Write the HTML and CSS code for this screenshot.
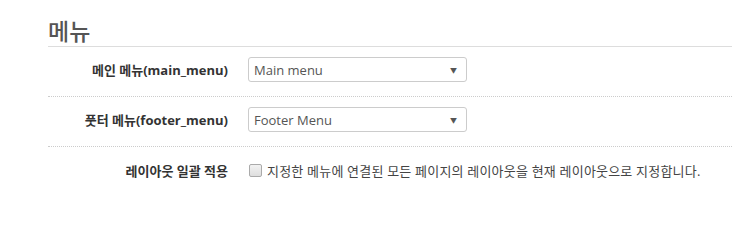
FILE: index.html
```html
<!DOCTYPE html>
<html lang="ko">
<head>
<meta charset="utf-8">
<link rel="stylesheet" href="styles.css">
</head>
<body>
<div class="panel">
  <h2 class="title">메뉴</h2>
  <div class="row">
    <label class="label">메인 메뉴(main_menu)</label>
    <div class="field">
      <div class="select"><span>Main menu</span><span class="caret">▼</span></div>
    </div>
  </div>
  <div class="row">
    <label class="label">풋터 메뉴(footer_menu)</label>
    <div class="field">
      <div class="select"><span>Footer Menu</span><span class="caret">▼</span></div>
    </div>
  </div>
  <div class="row last">
    <label class="label">레이아웃 일괄 적용</label>
    <div class="field check">
      <span class="box"></span>
      <span class="desc">지정한 메뉴에 연결된 모든 페이지의 레이아웃을 현재 레이아웃으로 지정합니다.</span>
    </div>
  </div>
</div>
</body>
</html>
```
FILE: styles.css
```css
html, body {
  margin: 0;
  padding: 0;
  background: #fff;
}
body {
  font-family: "Open Sans", "Noto Sans CJK KR", sans-serif;
  color: #333;
}
.panel {
  padding-left: 48px;
}
.title {
  margin: 0;
  padding-top: 14px;
  height: 32px;
  font-size: 23px;
  font-weight: 500;
  line-height: 32px;
  color: #555;
  font-family: "Noto Sans CJK KR", sans-serif;
  border-bottom: 1px solid #ddd;
}
.row {
  display: flex;
  align-items: center;
  padding: 10px 0 14px;
  border-bottom: 1px dotted #ccc;
}
.row.last {
  border-bottom: none;
  padding-top: 14px;
}
.label {
  width: 180px;
  box-sizing: border-box;
  text-align: right;
  font-size: 13px;
  font-weight: 700;
  color: #333;
}
.field {
  padding-left: 20px;
}
.select {
  width: 219px;
  height: 25px;
  box-sizing: border-box;
  border: 1px solid #ccc;
  border-radius: 3px;
  display: flex;
  align-items: center;
  justify-content: space-between;
  padding: 0 9px 0 5px;
  font-size: 13px;
  color: #555;
}
.caret {
  font-size: 7px;
  color: #555;
}
.check {
  display: flex;
  align-items: center;
}
.box {
  width: 11px;
  height: 11px;
  border: 1px solid #aaa;
  border-radius: 2px;
  background: linear-gradient(#f2f2f2, #dedede);
  margin-right: 5px;
  margin-left: 1px;
}
.desc {
  font-size: 13px;
  color: #444;
  letter-spacing: 0.2px;
}
```
